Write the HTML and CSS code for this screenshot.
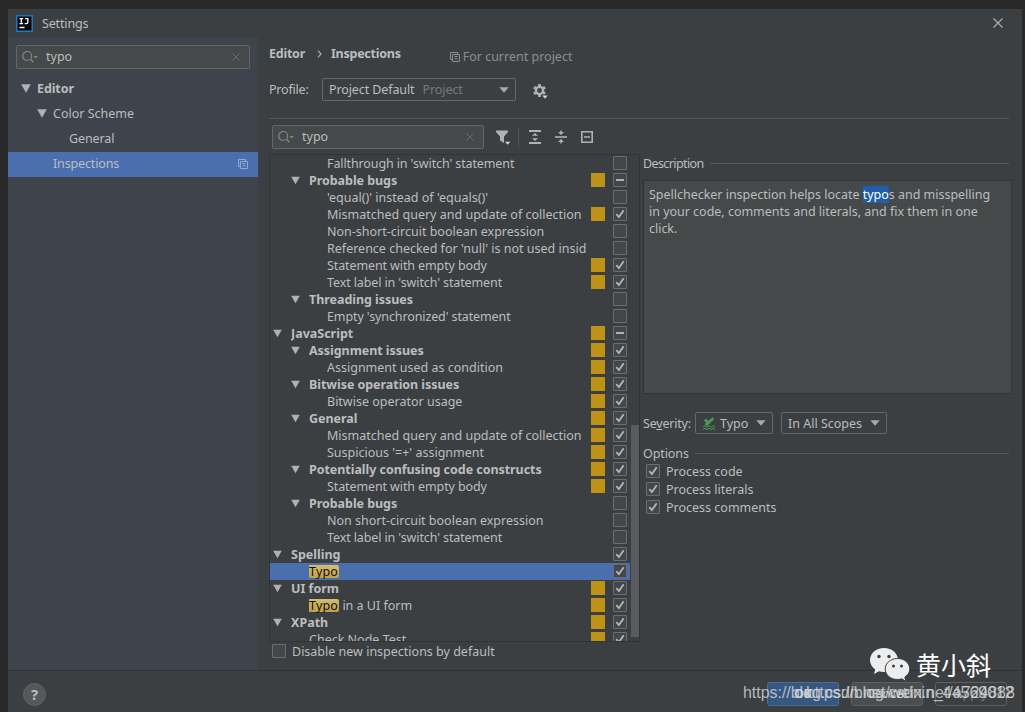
FILE: index.html
```
<!DOCTYPE html>
<html lang="en">
<head>
<meta charset="utf-8">
<title>Settings</title>
<link rel="stylesheet" href="styles.css">
</head>
<body>
<svg class="defs" width="0" height="0">
  <symbol id="search" viewBox="0 0 18 14"><circle cx="5.200" cy="6" r="4.5" fill="none" stroke="#848789" stroke-width="1.2"/><path d="M8.400 9.2l3 3" stroke="#848789" stroke-width="1.4"/><path d="M11.500 6h4.400l-2.200 2.500z" fill="#848789"/></symbol>
  <symbol id="tri" viewBox="0 0 10 9"><path d="M0.2 0.3h9.600L5 8.700z" fill="#afb1b3"/></symbol>
  <symbol id="down" viewBox="0 0 10 6"><path d="M0.3 0.3h9.400L5 5.700z" fill="#a6a8aa"/></symbol>
  <symbol id="cross" viewBox="0 0 10 10"><path d="M.5.5l9 9M9.500.5l-9 9" fill="none" stroke="currentColor" stroke-width="1.1"/></symbol>
  <symbol id="copy" viewBox="0 0 10 10"><path d="M7.5 2.5V.5h-7v7h2M2.5 2.5h7v7h-7zM4.500 4.500h3.2M4.500 6.800h3.2" fill="none" stroke="currentColor"/></symbol>
  <symbol id="check" viewBox="0 0 14 14"><path d="M3.3 7.1l2.6 3L10.7 3.2" fill="none" stroke="#b4b7b9" stroke-width="1.8"/></symbol>
</svg>
<main class="window">
  <header class="titlebar">
    <svg class="logo" viewBox="0 0 17 17"><rect x=".75" y=".75" width="15.5" height="15.5" fill="#07080c" stroke="#2673bd" stroke-width="1.5"/><path d="M3.5 3.700h3.600M5.300 3.7v5M3.5 8.7h3.600M9 3.700h2.800v3.600q0 1.4-1.5 1.400H8.700M3.5 12.500h5" fill="none" stroke="#fff" stroke-width="1.3"/></svg>
    <span class="t-title">Settings</span>
    <svg class="close"><use href="#cross"/></svg>
  </header>
  <div class="body">
    <aside class="sidebar">
      <div class="search side-search"><svg class="mag"><use href="#search"/></svg><span>typo</span><svg class="clear"><use href="#cross"/></svg></div>
      <div class="nav l1 bold"><svg class="tri"><use href="#tri"/></svg><span>Editor</span></div>
      <div class="nav l2"><svg class="tri"><use href="#tri"/></svg><span>Color Scheme</span></div>
      <div class="nav l3"><span>General</span></div>
      <div class="nav l4 active"><span>Inspections</span><svg class="copy"><use href="#copy"/></svg></div>
    </aside>
    <section class="content">
      <div class="crumbs"><b>Editor</b><svg class="chev" viewBox="0 0 5 8"><path d="M1 .7L4 4 1 7.3" fill="none" stroke="#a9abad" stroke-width="1.2"/></svg><b>Inspections</b><span class="scope"><svg class="copy"><use href="#copy"/></svg><span>For current project</span></span></div>
      <div class="profile"><span class="label">Profile:</span><div class="combo profile-combo"><span>Project Default</span><span class="dim">Project</span><svg class="arrow"><use href="#down"/></svg></div>
        <svg class="gear" viewBox="0 0 17 17"><circle cx="7.5" cy="7.5" r="3.6" fill="none" stroke="#afb1b3" stroke-width="2.4"/><path d="M7.5 1v2.4M7.5 11.6V14M1.9 4.25L4 5.45M11 9.55l2.1 1.2M1.9 10.75L4 9.55M11 5.45l2.1-1.2" stroke="#afb1b3" stroke-width="2.8"/><path d="M9.5 11.5h7v3l-3 2h-2z" fill="#3c3f41"/><path d="M10.2 12.5h5.600L13 15.7z" fill="#d2d4d5"/></svg>
      </div>
      <div class="columns">
        <div class="left">
          <div class="tools">
            <div class="search tree-search"><svg class="mag"><use href="#search"/></svg><span>typo</span><svg class="clear"><use href="#cross"/></svg></div>
            <svg class="filter" viewBox="0 0 16 16"><path d="M1 1.500h12v1.5L9 7.5V14l-4-2.5v-4L1 3z" fill="#afb1b3"/><path d="M9.5 11h6v5h-6z" fill="#3c3f41"/><path d="M10 12.700h5.400l-2.700 3z" fill="#d2d4d5"/></svg>
            <i class="sep"></i>
            <svg class="tool" viewBox="0 0 12 14"><path d="M0 1h12M0 13h12" stroke="#afb1b3" stroke-width="1.8"/><path d="M3 5.8L6 3l3 2.8zM3 8.2L6 11l3-2.8z" fill="#afb1b3"/></svg>
            <svg class="tool" viewBox="0 0 12 14"><path d="M0 7h12" stroke="#afb1b3" stroke-width="1.6"/><path d="M3 2l3 3 3-3zM3 12l3-3 3 3z" fill="#afb1b3"/><path d="M6 .5v3M6 10.5v3" stroke="#afb1b3" stroke-width="1.4"/></svg>
            <svg class="tool" viewBox="0 0 12 14"><path d="M.8 1.8h10.4v10.4H.8zM3 7h6" fill="none" stroke="#afb1b3" stroke-width="1.6"/></svg>
          </div>
          <div class="treewrap"><div class="tree" id="tree"></div><div class="track"><i class="thumb"></i></div></div>
          <div class="option disable"><i class="box"></i><span>Disable new inspections by default</span></div>
        </div>
        <div class="right">
          <div class="heading"><span>Description</span><i></i></div>
          <div class="desc"><p>Spellchecker inspection helps locate <mark>typo</mark>s and misspelling</p><p>in your code, comments and literals, and fix them in one</p><p>click.</p></div>
          <div class="severity"><span class="label">Se<u>v</u>erity:</span>
            <div class="combo typo-combo"><svg class="typo-icon" viewBox="0 0 12 13"><path d="M1.800 2.500L6.500 7M2.500 8L10.500 1.200" fill="none" stroke="#499c54" stroke-width="2.6"/><path d="M0 10.200l2-1.5 2 1.5 2-1.5 2 1.500 2-1.5 2 1.5M0 12.7l2-1.5 2 1.5 2-1.500 2 1.5 2-1.500 2 1.5" fill="none" stroke="#499c54"/></svg><span>Typo</span><svg class="arrow"><use href="#down"/></svg></div>
            <div class="combo scope-combo"><span>In All Scopes</span><svg class="arrow"><use href="#down"/></svg></div>
          </div>
          <div class="heading opts"><span>Options</span><i></i></div>
          <div class="option"><i class="box"><svg><use href="#check"/></svg></i><span>Process code</span></div>
          <div class="option"><i class="box"><svg><use href="#check"/></svg></i><span>Process literals</span></div>
          <div class="option"><i class="box"><svg><use href="#check"/></svg></i><span>Process comments</span></div>
        </div>
      </div>
    </section>
  </div>
  <footer class="footer"><span class="help">?</span><div class="buttons"><span class="btn primary">OK</span><span class="btn">Cancel</span><span class="btn disabled">Apply</span></div></footer>
</main>
<div class="brand">
  <svg viewBox="0 0 40 34"><path d="M14 0C6 0 0 5.4 0 12.1c0 3.8 2 7.1 5.200 9.300L4 26l5-2.700c7 2.200 19-1.500 19-11.200C28 5.400 22 0 14 0z" fill="#ededed"/><path d="M27.500 10.500c-7 0-12.300 4.700-12.300 10.500S20.500 31.500 27.500 31.500c1.600 0 3-.3 4.300-.7l4.200 2.600-1.200-4.300c3-2 5-4.800 5-8.100 0-5.800-5.300-10.500-12.300-10.500z" fill="#ededed" stroke="#3c3f41" stroke-width="1"/><g fill="#3c3f41"><circle cx="9" cy="8.500" r="1.700"/><circle cx="19" cy="8.500" r="1.700"/><circle cx="23.500" cy="18" r="1.500"/><circle cx="31.500" cy="18" r="1.500"/></g></svg>
  <span>黄小斜</span>
</div>
<div class="mark m1">https://blog.csdn.net/weixin_44569012</div>
<div class="mark m2">https://blog.csdn.net/a724888</div>
<script src="tree.js"></script>
</body>
</html>
```
FILE: styles.css
```
* { box-sizing: border-box; }
body { margin: 0; width: 1025px; height: 712px; overflow: hidden; position: relative; background: #292929; padding: 9px 3px 0 8px; font-family: "Noto Sans", "Noto Sans CJK SC", sans-serif; font-size: 12.5px; line-height: 17px; color: #bbbdbf; white-space: nowrap; }
svg, i { display: block; flex: none; }
.defs { position: absolute; }
b, .bold { font-weight: 700; }
.window { height: 703px; background: #3c3f41; display: flex; flex-direction: column; }
.titlebar { height: 28px; display: flex; align-items: center; padding: 0 19px 0 8px; }
.logo { width: 17px; height: 17px; margin-right: 9px; }
.t-title { letter-spacing: -.15px; }
.close { width: 10px; height: 10px; margin-left: auto; color: #afb1b3; }
.body { height: 633px; display: flex; }
.sidebar { width: 250px; background: #3f434c; padding-top: 8px; }
.search { height: 24px; display: flex; align-items: center; border: 1px solid #646769; border-radius: 2px; background: #45494a; line-height: 16px; }
.mag { width: 18px; height: 14px; margin: 0 6px 0 5px; }
.clear { width: 8px; height: 8px; margin-left: auto; margin-right: 9px; color: #6d7073; }
.side-search { margin: 0 8px 8px; }
.nav { height: 25px; display: flex; align-items: center; padding: 0 0 2px 45px; }
.nav .tri { margin-right: 6px; }
.tri { width: 10px; height: 9px; }
.nav.l1 { padding-left: 13px; letter-spacing: -.1px; }
.nav.l2 { padding-left: 29px; }
.nav.l3 { padding-left: 61px; letter-spacing: -.1px; }
.active { background: #4b6eaf; letter-spacing: -.15px; }
.copy { width: 10px; height: 10px; }
.active .copy { margin-left: auto; margin-right: 10px; color: #93a8cf; }
.content { flex: 1; padding-left: 11px; }
.crumbs { height: 33px; display: flex; align-items: center; }
.crumbs b { letter-spacing: -.25px; }
.chev { width: 5px; height: 8px; margin: 0 9px 0 12px; }
.scope { display: flex; align-items: center; gap: 3px; margin: 6px 0 0 49px; color: #8b8e90; }
.profile { height: 49px; display: flex; align-items: flex-start; padding-top: 8px; border-bottom: 1px solid #56595b; margin-right: 13px; }
.profile .label { width: 53px; line-height: 23px; letter-spacing: -.2px; }
.combo { display: flex; align-items: center; border: 1px solid #65686a; border-radius: 2px; background: #3c3f41; height: 22px; }
.profile-combo { width: 194px; height: 23px; padding: 0 6px; letter-spacing: -.1px; }
.dim { color: #777a7c; margin-left: 8px; }
.arrow { width: 10px; height: 6px; margin-left: auto; }
.gear { width: 17px; height: 17px; margin: 5px 0 0 16px; }
.columns { display: flex; }
.left { width: 371px; }
.tools { display: flex; align-items: center; padding: 6px 0 0 3px; height: 30px; }
.tree-search { width: 212px; }
.filter { width: 16px; height: 16px; margin-left: 11px; }
.sep { width: 1px; height: 20px; background: #515456; margin: 0 10px 0 7px; }
.tool { width: 12px; height: 14px; margin-right: 14px; }
.treewrap { height: 488px; width: 371px; margin-top: 5px; border: 1px solid #313436; display: flex; overflow: hidden; }
.tree { width: 360px; }
.track { width: 9px; padding: 270px 0 0 1px; }
.thumb { width: 8px; height: 212px; background: #595c5d; }
.row { height: 17px; display: flex; align-items: center; padding-right: 3px; }
.row .tri { margin: 0 9px 1px 3px; width: 9px; height: 9px; }
.row.g2 { padding-left: 18px; }
.row.i3 { padding-left: 57px; }
.row.i2 { padding-left: 39px; }
.row .txt { flex: none; width: 260px; overflow: hidden; height: 17px; }
.row.g1 .txt { width: 290px; }
.row.g2 .txt { width: 272px; letter-spacing: -.05px; }
.row.i2 .txt { width: 278px; }
.row .txt.tight { letter-spacing: -.11px; }
.row .box { margin-bottom: 2px; }
.sev { width: 14px; height: 14px; margin: 0 8px 2px auto; }
.sev.on { background: #be9117; }
.box { width: 14px; height: 14px; border: 1px solid #6b6e70; border-radius: 1px; background: #43474a; display: flex; align-items: center; justify-content: center; }
.box svg { width: 14px; height: 14px; flex: none; }
.dash { width: 8px; height: 2px; background: #afb1b3; }
.row.sel { background: #4b6eaf; }
.hl { background: linear-gradient(#d5bd70, #c0a040); color: #111; border-radius: 2px; display: inline-block; line-height: 13px; height: 13px; margin-left: -1px; padding: 0 1px; letter-spacing: .2px; }
.option { display: flex; align-items: center; gap: 6px; height: 18px; padding-left: 3px; }
.disable { height: 18px; }
.right { width: 370px; padding: 36px 0 0 3px; }
.heading { width: 366px; height: 17px; display: flex; align-items: center; gap: 6px; letter-spacing: -.1px; }
.heading:not(.opts) span { letter-spacing: -.6px; word-spacing: 0; }
.heading:not(.opts) { letter-spacing: 0; }
.heading i { height: 1px; background: #56595b; flex: 1; }
.desc { margin-top: 8px; width: 369px; height: 214px; background: #45494a; border: 1px solid #323537; padding: 5px; letter-spacing: -.02px; }
.desc p { margin: 0; }
mark { background: #1f5eac; color: #fff; }
.severity { display: flex; align-items: center; height: 24px; margin-top: 17px; }
.severity .label { width: 52px; letter-spacing: -.2px; }
.typo-combo { width: 78px; padding: 0 6px 0 7px; margin-right: 8px; }
.typo-icon { width: 12px; height: 13px; margin-right: 5px; }
.scope-combo { width: 106px; padding: 0 6px; }
.opts { margin-top: 10px; }
.footer { height: 42px; border-top: 1px solid #303335; display: flex; align-items: center; padding: 5px 15px 0 15px; justify-content: space-between; }
.help { width: 23px; height: 23px; border-radius: 50%; background: #54585a; border: 1px solid #606466; font: bold 15px/21px "Noto Sans", sans-serif; text-align: center; }
.buttons { display: flex; gap: 12px; }
.btn { width: 72px; height: 24px; border: 1px solid #5c6062; border-radius: 3px; background: #4a4e50; text-align: center; line-height: 21px; }
.primary { background: #365880; border-color: #4b6c95; color: #c8cdd2; font-weight: 700; }
.disabled { background: #3c3f41; color: #777a7c; }
.brand { position: absolute; left: 870px; top: 646px; display: flex; align-items: center; gap: 6px; color: #fff; font: 25px/36px "Noto Sans CJK SC", sans-serif; }
.brand svg { width: 40px; height: 34px; margin-top: 2px; }
.mark { position: absolute; top: 683px; font: 16px/20px "Liberation Sans", sans-serif; letter-spacing: -.04px; color: rgba(215, 217, 219, .8); }
.m1 { left: 743px; }
.m2 { left: 806px; }
```
FILE: tree.js
```
// kind, label, severity shown, checkbox state (0 empty, 1 checked, 2 mixed)
const rows = [
  ['i3', "Fallthrough in 'switch' statement", 0, 0],
  ['g2', 'Probable bugs', 1, 2],
  ['i3', "'equal()' instead of 'equals()'", 0, 0],
  ['i3', 'Mismatched query and update of collection', 1, 1],
  ['i3', 'Non-short-circuit boolean expression', 0, 0],
  ['i3', "Reference checked for 'null' is not used insid", 0, 0],
  ['i3', 'Statement with empty body', 1, 1],
  ['i3', "Text label in 'switch' statement", 1, 1],
  ['g2', 'Threading issues', 0, 0],
  ['i3', "Empty 'synchronized' statement", 0, 0],
  ['g1', 'JavaScript', 1, 2],
  ['g2', 'Assignment issues', 1, 1],
  ['i3', 'Assignment used as condition', 1, 1],
  ['g2', 'Bitwise operation issues', 1, 1],
  ['i3', 'Bitwise operator usage', 1, 1],
  ['g2', 'General', 1, 1],
  ['i3', 'Mismatched query and update of collection', 1, 1],
  ['i3', "Suspicious '=+' assignment", 1, 1],
  ['g2', 'Potentially confusing code constructs', 1, 1],
  ['i3', 'Statement with empty body', 1, 1],
  ['g2', 'Probable bugs', 0, 0],
  ['i3', 'Non short-circuit boolean expression', 0, 0],
  ['i3', "Text label in 'switch' statement", 0, 0],
  ['g1', 'Spelling', 0, 1],
  ['i2 sel', '<span class="hl">Typo</span>', 0, 1],
  ['g1', 'UI form', 1, 1],
  ['i2', '<span class="hl">Typo</span> in a UI form', 1, 1],
  ['g1', 'XPath', 1, 1],
  ['i2', 'Check Node Test', 1, 1],
];
const marks = ['', '<svg><use href="#check"/></svg>', '<i class="dash"></i>'];
document.getElementById('tree').innerHTML = rows.map(([kind, label, sev, state]) => {
  const group = kind[0] === 'g';
  const tight = /statement/i.test(label) ? ' tight' : '';
  return `<div class="row ${kind}${group ? ' bold' : ''}">${group ? '<svg class="tri"><use href="#tri"/></svg>' : ''}<span class="txt${tight}">${label}</span><i class="sev${sev ? ' on' : ''}"></i><i class="box">${marks[state]}</i></div>`;
}).join('');
```
